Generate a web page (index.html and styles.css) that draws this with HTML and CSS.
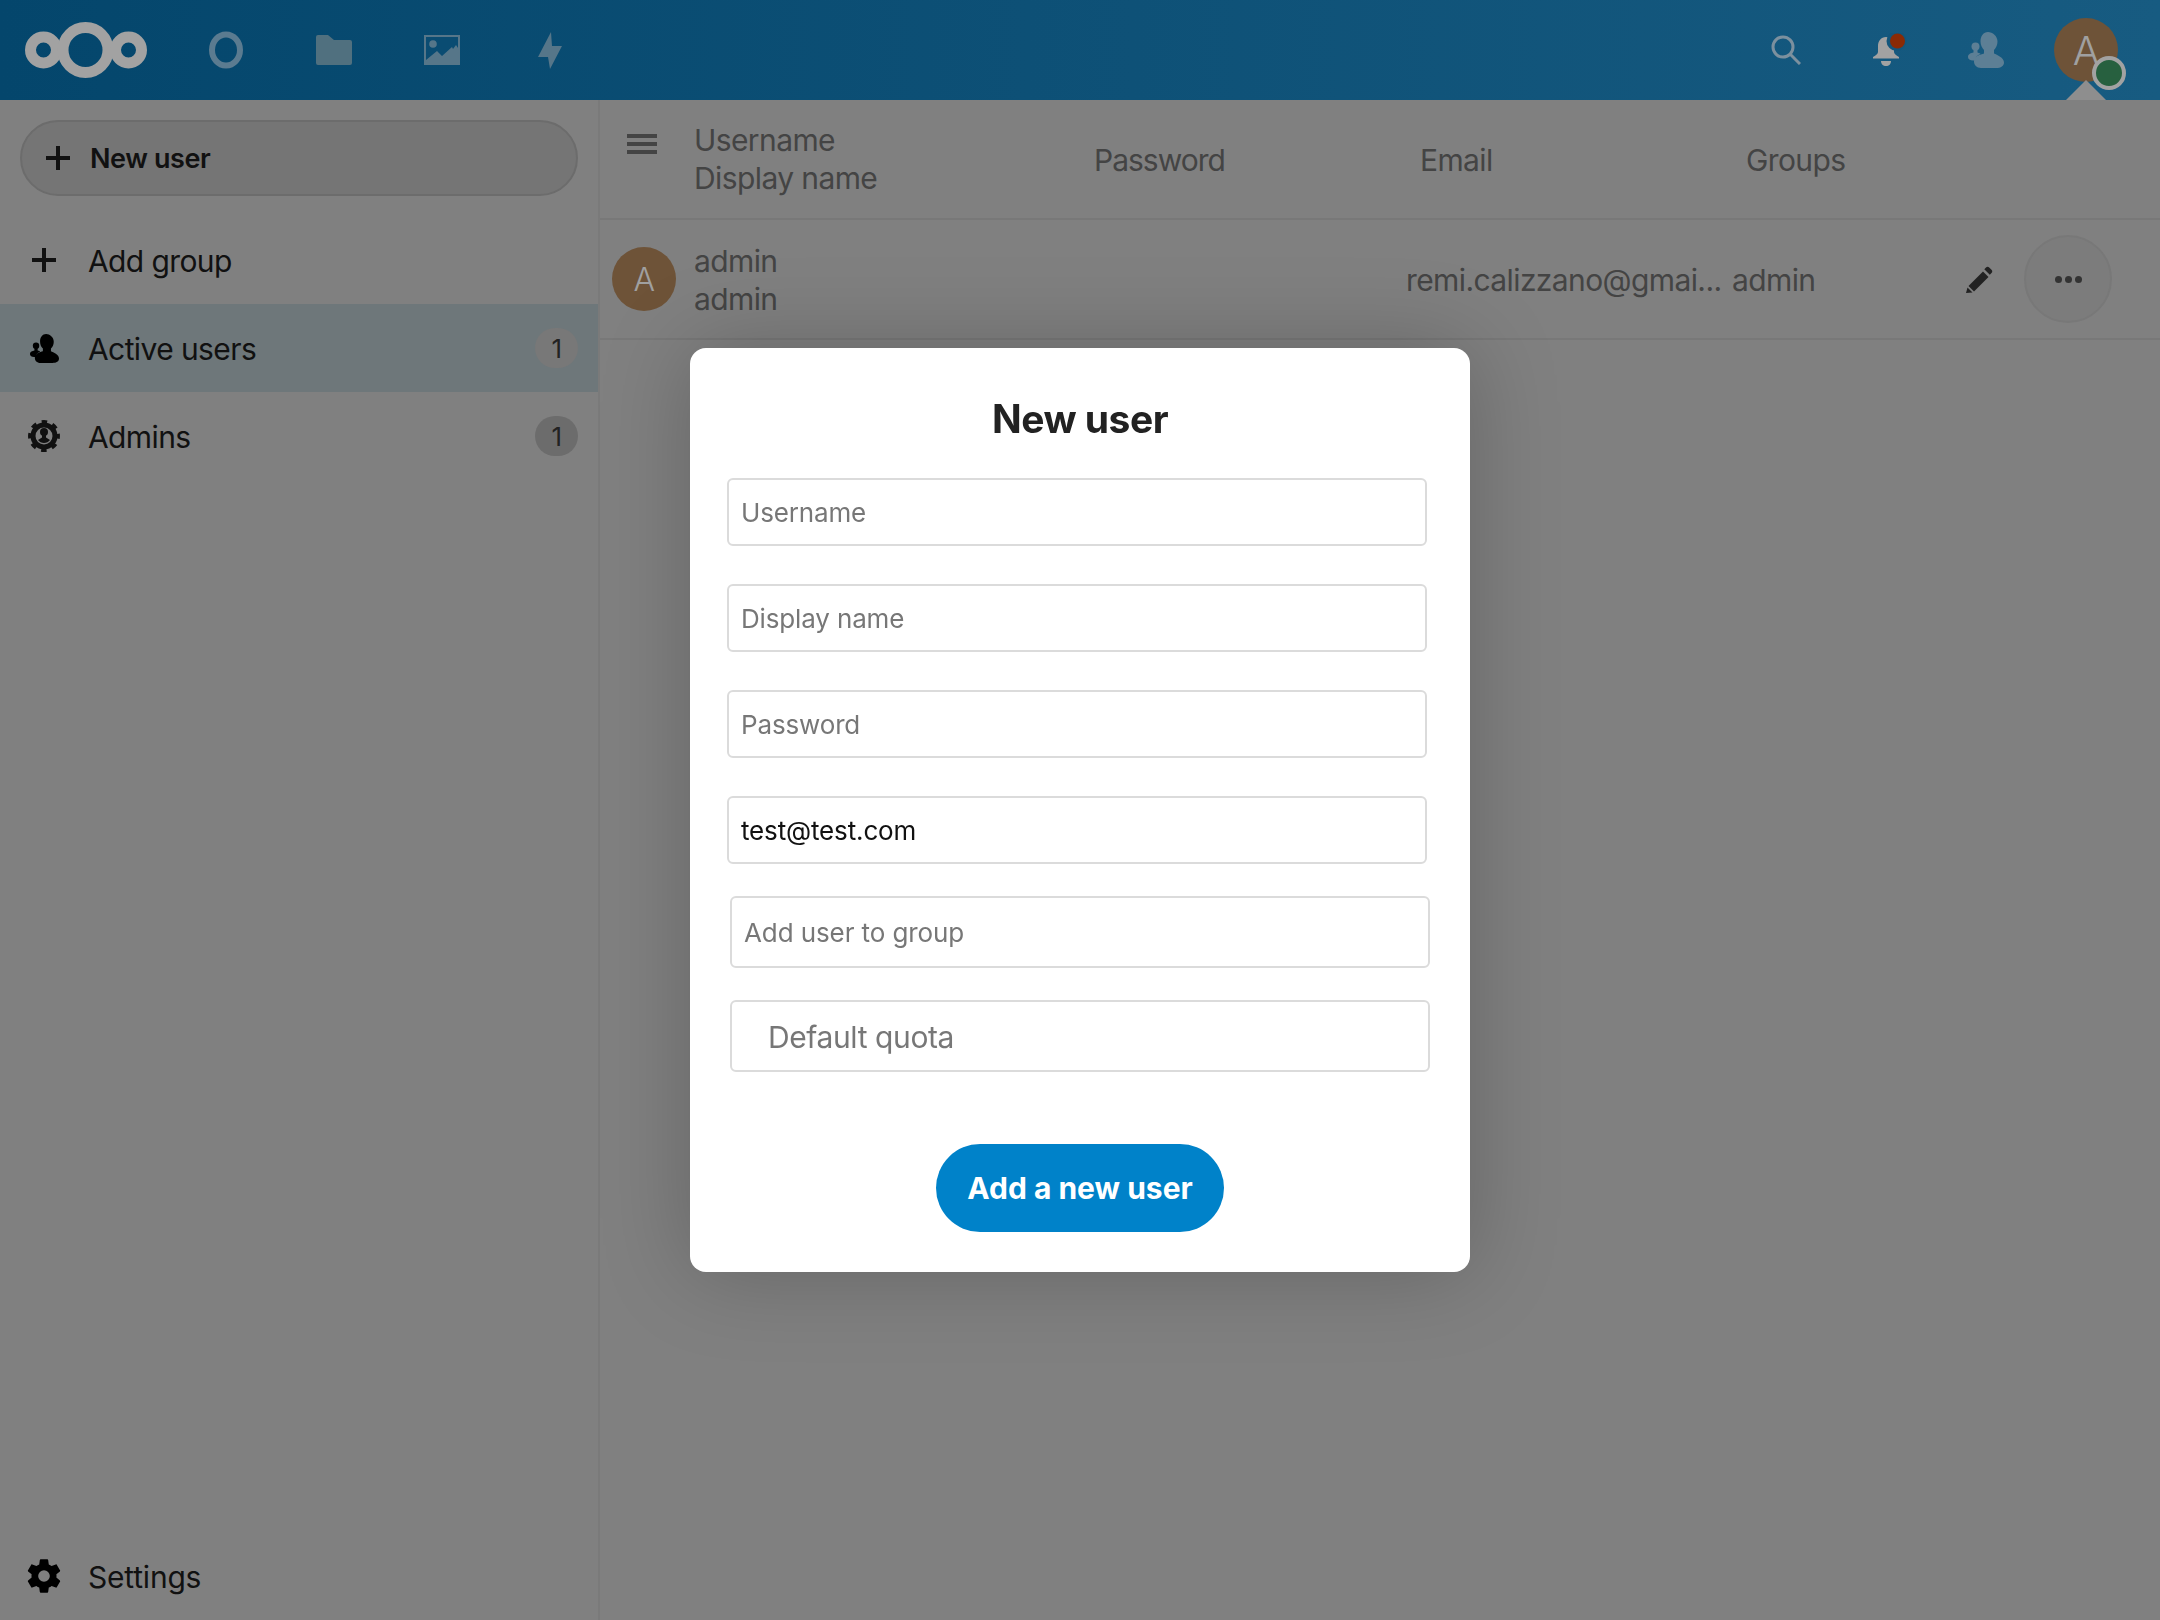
FILE: index.html
```html
<!DOCTYPE html>
<html lang="en">
  <head>
    <meta charset="UTF-8" />
    <title>Users</title>
    <link rel="stylesheet" href="styles.css">
  </head>
  <body>
    <svg class="defs" width="0" height="0">
      <symbol id="i-users" viewBox="0 0 36 36">
        <path d="M20 0c-4.5 0-7.5 4-7.5 9.5 0 3.5 1.5 6.5 3.5 8.5v3.5c-3.5 1-10 2.5-10 8 0 3.5 2.500 6.500 7 6.500h15c5 0 8-2 8-5.500 0-5-7-7.500-10-9v-3.500c2-2 3.500-5 3.500-8.500C29.500 4 24.500 0 20 0z" />
        <circle cx="7.500" cy="14.500" r="4" />
        <path d="M5.500 17.500h4v3c2 .5 3 1 3 1.500-3 1-5 3-5.500 6.500H5c-3 0-5-1.500-5-3.500 0-3 3-4 5.500-4.500z" />
      </symbol>
      <symbol id="i-cog" viewBox="0 0 24 24">
        <path d="M12,15.5A3.5,3.5 0 0,1 8.5,12A3.5,3.5 0 0,1 12,8.5A3.5,3.5 0 0,1 15.5,12A3.5,3.5 0 0,1 12,15.5M19.43,12.97C19.47,12.65 19.5,12.33 19.5,12C19.5,11.67 19.47,11.34 19.43,11L21.54,9.37C21.73,9.22 21.78,8.95 21.66,8.73L19.66,5.27C19.54,5.05 19.27,4.96 19.05,5.05L16.56,6.05C16.04,5.66 15.5,5.32 14.87,5.07L14.5,2.42C14.46,2.18 14.25,2 14,2H10C9.75,2 9.54,2.18 9.5,2.42L9.13,5.07C8.5,5.32 7.96,5.66 7.44,6.05L4.95,5.05C4.73,4.96 4.46,5.05 4.34,5.27L2.34,8.73C2.21,8.95 2.27,9.22 2.46,9.37L4.57,11C4.53,11.34 4.5,11.67 4.5,12C4.5,12.33 4.53,12.65 4.57,12.97L2.46,14.63C2.27,14.78 2.21,15.05 2.34,15.27L4.34,18.73C4.46,18.95 4.73,19.03 4.95,18.95L7.44,17.94C7.96,18.34 8.5,18.68 9.13,18.93L9.5,21.58C9.54,21.82 9.75,22 10,22H14C14.25,22 14.46,21.82 14.5,21.58L14.87,18.93C15.5,18.67 16.04,18.34 16.56,17.94L19.05,18.95C19.27,19.03 19.54,18.95 19.66,18.73L21.66,15.27C21.78,15.05 21.73,14.78 21.54,14.63L19.43,12.97Z" />
      </symbol>
    </svg>

    <header class="topbar">
      <div class="logo">
        <svg width="122" height="56" viewBox="0 0 122 56" fill="none" stroke="#a2a2a2" stroke-width="11">
          <circle cx="18.500" cy="28" r="13" />
          <circle cx="60.500" cy="28" r="22.500" />
          <circle cx="103.500" cy="28" r="13" />
        </svg>
      </div>
      <nav class="apps">
        <a class="app">
          <svg width="36" height="38" viewBox="0 0 36 38" fill="none" stroke="#5b7b90" stroke-width="6"><ellipse cx="18" cy="19" rx="14" ry="15.500" /></svg>
        </a>
        <a class="app">
          <svg width="36" height="30" viewBox="0 0 36 30" fill="#50707f"><path d="M0 2Q0 0 2 0H12L18 5H34Q36 5 36 7V28Q36 30 34 30H2Q0 30 0 28Z" /></svg>
        </a>
        <a class="app">
          <svg width="36" height="30" viewBox="0 0 36 30">
            <rect width="36" height="30" fill="#567689" />
            <rect x="2" y="2" width="32" height="26" fill="#0a4c72" />
            <circle cx="9" cy="9" r="3.800" fill="#567689" />
            <path d="M2 28V25L13 16 18 21 28 12 29 14 32 10 34 13V28Z" fill="#567689" />
          </svg>
        </a>
        <a class="app">
          <svg width="24" height="37" viewBox="0 0 24 37" fill="#567689"><path d="M13 0 0 25H10L12 37 24 14H14Z" /></svg>
        </a>
      </nav>
      <div class="top-right">
        <a class="top-icon">
          <svg width="30" height="30" viewBox="0 0 30 30" fill="none" stroke="#7c909e" stroke-width="3"><circle cx="12" cy="12" r="10" /><path d="M19 19 29 29" /></svg>
        </a>
        <a class="top-icon">
          <svg class="bell" width="34" height="34" viewBox="0 0 34 34">
            <path fill="#a2a2a2" d="M13 4c-5 0-8 4-8 9v6c0 2-2 3-5 5v1.500h26V24c-3-2-5-3-5-5v-6c0-5-3-9-8-9z" />
            <path fill="#a2a2a2" d="M8 28h10c0 3-2 5-5 5s-5-2-5-5z" />
            <circle cx="23.500" cy="8" r="10" fill="#13567c" />
            <circle cx="24.500" cy="8" r="7.500" fill="#8a2a05" />
          </svg>
        </a>
        <a class="top-icon">
          <svg class="users-top" width="36" height="36"><use href="#i-users" /></svg>
        </a>
        <a class="top-icon">
          <span class="avatar avatar-top">A</span>
          <span class="status"></span>
          <span class="caret"></span>
        </a>
      </div>
    </header>

    <div class="main">
      <aside class="sidebar">
        <button class="new-user" type="button">
          <svg width="24" height="24" viewBox="0 0 24 24" fill="#111"><path d="M10 0h4v10h10v4H14v10h-4V14H0v-4h10z" /></svg>
          New user
        </button>
        <ul class="groups">
          <li class="group">
            <span class="group-icon"><svg width="24" height="24" viewBox="0 0 24 24" fill="#111"><path d="M10 0h4v10h10v4H14v10h-4V14H0v-4h10z" /></svg></span>
            Add group
          </li>
          <li class="group active">
            <span class="group-icon"><svg width="29" height="29"><use href="#i-users" /></svg></span>
            Active users
            <span class="count">1</span>
          </li>
          <li class="group">
            <span class="group-icon">
              <svg width="32" height="32" viewBox="0 0 32 32" fill="#111">
                <circle cx="16" cy="16" r="11" fill="none" stroke="#111" stroke-width="5" />
                <circle cx="16" cy="16" r="14.200" fill="none" stroke="#111" stroke-width="3.500" stroke-dasharray="5.500 5.650" stroke-dashoffset="2.750" />
                <circle cx="16" cy="12" r="4" />
                <path d="M14 15h4v2.500l4 2.500c-1.500 2-3.500 3-6 3s-4.500-1-6-3l4-2.500z" />
              </svg>
            </span>
            Admins
            <span class="count">1</span>
          </li>
        </ul>
        <div class="group settings">
          <span class="group-icon"><svg width="40" height="40"><use href="#i-cog" /></svg></span>
          Settings
        </div>
      </aside>

      <section class="content">
        <div class="table-head">
          <svg class="menu" width="30" height="20" viewBox="0 0 30 20" fill="#444"><path d="M0 0h30v4H0zM0 8h30v4H0zM0 16h30v4H0z" /></svg>
          <div class="names head-names">Username<br>Display name</div>
          <div class="col-password">Password</div>
          <div>Email</div>
          <div>Groups</div>
        </div>
        <div class="table-row">
          <span class="avatar avatar-row">A</span>
          <div class="names">admin<br>admin</div>
          <div class="email">remi.calizzano@gmai...</div>
          <div>admin</div>
          <svg class="pencil" width="27" height="27" viewBox="0 0 27 27" fill="#222">
            <path d="M20 1.500c1-1 2.200-1 3.200 0l2.300 2.300c1 1 1 2.200 0 3.200l-1.700 1.700-5.500-5.500z" />
            <path d="M17 5.500 22.500 11 8 25.500l-5.500-5.500z" />
            <path d="M1.500 21.500 6.500 26.500 0 27z" />
          </svg>
          <button class="more" type="button"><i></i><i></i><i></i></button>
        </div>
      </section>
    </div>

    <div class="modal-wrap">
      <form class="modal">
        <h2>New user</h2>
        <input class="field" type="text" placeholder="Username" />
        <input class="field" type="text" placeholder="Display name" />
        <input class="field" type="password" placeholder="Password" />
        <input class="field" type="email" value="test@test.com" />
        <input class="select" type="text" placeholder="Add user to group" />
        <input class="select quota" type="text" placeholder="Default quota" />
        <button class="submit" type="button">Add a new user</button>
      </form>
    </div>
  </body>
</html>
```

FILE: styles.css
```css
* {
  box-sizing: border-box;
}

body {
  margin: 0;
  width: 2160px;
  height: 1620px;
  overflow: hidden;
  font-family: Inter, "Liberation Sans", sans-serif;
  font-size: 30px;
  letter-spacing: -0.6px;
  color: #444;
  background-color: #808080;
}

.defs {
  position: absolute;
}

/* Top bar */
.topbar {
  display: flex;
  align-items: center;
  height: 100px;
  padding-left: 25px;
  background: linear-gradient(90deg, #04466c, #175b81);
}

.logo {
  display: flex;
  width: 147px;
}

.apps {
  display: flex;
}

.app {
  display: flex;
  justify-content: center;
  align-items: center;
  width: 108px;
  height: 100px;
}

.top-right {
  display: flex;
  margin-left: auto;
  padding-right: 24px;
}

.top-icon {
  position: relative;
  display: flex;
  justify-content: center;
  align-items: center;
  width: 100px;
  height: 100px;
}

.bell {
  margin-left: 8px;
}

.users-top {
  fill: #5d7f95;
}

.avatar {
  display: flex;
  justify-content: center;
  align-items: center;
  width: 64px;
  height: 64px;
  border-radius: 50%;
  background-color: #6e5338;
  color: #a0a0a0;
  font-weight: 300;
}

.avatar-top {
  font-size: 40px;
}

.avatar-row {
  font-size: 32px;
}

.status {
  position: absolute;
  left: 56px;
  top: 56px;
  width: 34px;
  height: 34px;
  border: 4px solid #a2a2a2;
  border-radius: 50%;
  background-color: #27603f;
}

.caret {
  position: absolute;
  left: 30px;
  bottom: 0;
  border-left: 20px solid transparent;
  border-right: 20px solid transparent;
  border-bottom: 20px solid #8e8e8e;
}

/* Main layout */
.main {
  display: flex;
  height: 1520px;
}

.sidebar {
  display: flex;
  flex-direction: column;
  width: 600px;
  border-right: 2px solid #7a7a7a;
  color: #111;
}

.new-user {
  display: flex;
  align-items: center;
  gap: 20px;
  width: 558px;
  height: 76px;
  margin: 20px 0 20px 20px;
  padding: 0 0 0 24px;
  border: 2px solid #6c6c6c;
  border-radius: 38px;
  background-color: #757575;
  color: #111;
  font-family: inherit;
  font-size: 27px;
  font-weight: 600;
  letter-spacing: -0.4px;
}

.groups {
  margin: 0;
  padding: 0;
  list-style: none;
}

.group {
  display: flex;
  align-items: center;
  height: 88px;
  padding: 2px 20px 0 0;
}

.group.active {
  background-color: #6e777a;
}

.group-icon {
  display: flex;
  justify-content: center;
  align-items: center;
  width: 88px;
  margin-top: -2px;
}

.count {
  display: flex;
  justify-content: center;
  align-items: center;
  width: 43px;
  height: 40px;
  margin: -2px 0 0 auto;
  border-radius: 20px;
  background-color: #6c6c6c;
  font-size: 26px;
  color: #222;
}

.active .count {
  background-color: #787878;
}

.settings {
  margin-top: auto;
  letter-spacing: -0.2px;
}

/* Users table */
.content {
  flex: 1;
}

.table-head {
  display: grid;
  grid-template-columns: 94px 400px 326px 326px 1fr;
  align-items: center;
  height: 120px;
  padding-top: 2px;
  border-bottom: 2px solid #787878;
}

.menu {
  margin: -32px 0 0 27px;
}

.names {
  line-height: 38px;
}

.head-names {
  margin-top: -3px;
}

.col-password {
  letter-spacing: -1px;
}

.table-row {
  display: grid;
  grid-template-columns: 94px 712px 326px 1fr 88px;
  align-items: center;
  height: 120px;
  padding: 2px 48px 0 0;
  border-bottom: 2px solid #787878;
}

.avatar-row {
  margin: -2px 0 0 12px;
}

.email {
  white-space: nowrap;
  letter-spacing: -0.6px;
}

.pencil {
  position: absolute;
  left: 1966px;
  top: 266px;
}

.more {
  display: flex;
  justify-content: center;
  align-items: center;
  gap: 3px;
  width: 88px;
  height: 88px;
  margin-top: -2px;
  padding: 0;
  border: 2px solid #787878;
  border-radius: 50%;
  background-color: #7c7c7c;
}

.more i {
  width: 7px;
  height: 7px;
  border-radius: 50%;
  background-color: #333;
}

/* New user dialog */
.modal-wrap {
  position: fixed;
  inset: 0;
  display: flex;
  justify-content: center;
  align-items: center;
}

.modal {
  display: flex;
  flex-direction: column;
  width: 780px;
  height: 924px;
  padding: 0 37px;
  border-radius: 16px;
  background-color: #fff;
  box-shadow: 0 0 90px rgba(0, 0, 0, 0.22);
}

h2 {
  height: 130px;
  margin: 0;
  padding-top: 46px;
  font-size: 39px;
  font-weight: 700;
  line-height: 50px;
  letter-spacing: -0.5px;
  text-align: center;
  color: #222;
}

input {
  font-family: inherit;
  border: 2px solid #dbdbdb;
  border-radius: 6px;
  background-color: #fff;
  color: #111;
  outline: none;
}

input::placeholder {
  color: #777;
  opacity: 1;
}

.field {
  flex: none;
  width: 700px;
  height: 68px;
  margin-bottom: 38px;
  padding: 0 12px;
  font-size: 26px;
  letter-spacing: -0.15px;
}

.select {
  flex: none;
  width: 700px;
  height: 72px;
  margin: -6px 0 38px 3px;
  padding: 0 12px;
  font-size: 26px;
  letter-spacing: -0.1px;
}

.quota {
  padding: 2px 0 0 36px;
  font-size: 30px;
  letter-spacing: -0.4px;
}

.submit {
  align-self: center;
  width: 288px;
  height: 88px;
  margin-top: 34px;
  border: none;
  border-radius: 44px;
  background-color: #0082c9;
  color: #fff;
  font-family: inherit;
  font-size: 30px;
  font-weight: 700;
  letter-spacing: 0;
}
```
